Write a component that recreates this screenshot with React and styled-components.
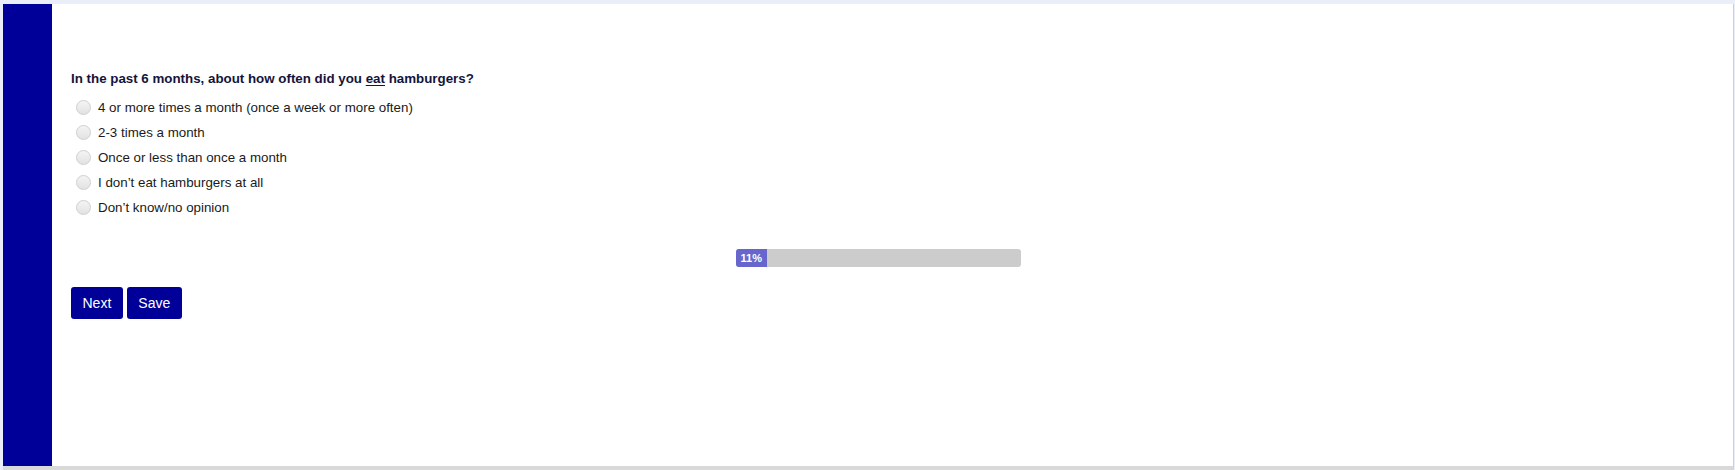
import styled, { createGlobalStyle } from 'styled-components'

const GlobalStyle = createGlobalStyle`
    html, body {
        margin: 0;
        padding: 0;
        background: #e9eef8;
    }
    body {
        font-family: "Liberation Sans", Arial, sans-serif;
    }
`

const options = [
    '4 or more times a month (once a week or more often)',
    '2-3 times a month',
    'Once or less than once a month',
    'I don\u2019t eat hamburgers at all',
    'Don\u2019t know/no opinion',
]

const progress = 11

function App() {
    return (
        <Frame>
            <GlobalStyle />
            <Panel>
                <Sidebar />
                <Content>
                    <Question>
                        In the past 6 months, about how often did you <u>eat</u> hamburgers?
                    </Question>
                    <OptionList>
                        {options.map((option) => (
                            <Option key={option}>
                                <Radio type="radio" name="hamburgers" />
                                {option}
                            </Option>
                        ))}
                    </OptionList>
                    <ProgressRow>
                        <ProgressBar>
                            <ProgressFill style={{ width: `${progress}%` }}>{progress}%</ProgressFill>
                        </ProgressBar>
                    </ProgressRow>
                    <Buttons>
                        <Button>Next</Button>
                        <Button>Save</Button>
                    </Buttons>
                </Content>
            </Panel>
        </Frame>
    )
}

const Frame = styled.div`
    height: 470px;
    box-sizing: border-box;
    padding: 4px 1px 0 3px;
    background: #e9eef8;
`

const Panel = styled.div`
    display: flex;
    height: 466px;
    box-sizing: border-box;
    background: white;
    border-bottom: 4px solid #d9d9d9;
    border-right: 1px solid #d0d0d0;
`

const Sidebar = styled.div`
    width: 49px;
    flex-shrink: 0;
    background: #000099;
`

const Content = styled.div`
    flex: 1;
    padding: 67px 48px 0 19px;
`

const Question = styled.div`
    font-size: 13.33px;
    font-weight: bold;
    line-height: 16px;
    color: #14143a;

    u {
        text-decoration-thickness: 1px;
        text-underline-offset: 2px;
    }
`

const OptionList = styled.div`
    display: flex;
    flex-direction: column;
    margin-top: 8px;
`

const Option = styled.label`
    display: flex;
    align-items: center;
    gap: 7px;
    height: 25px;
    padding-left: 5px;
    font-size: 13.33px;
    color: #1a1a1a;
`

const Radio = styled.input`
    appearance: none;
    margin: 0;
    width: 15px;
    height: 15px;
    border-radius: 50%;
    border: 1px solid #cfcfcf;
    background: linear-gradient(#f4f4f4, #e2e2e2);
    box-sizing: border-box;
`

const ProgressRow = styled.div`
    display: flex;
    justify-content: center;
    margin-top: 29px;
`

const ProgressBar = styled.div`
    display: flex;
    width: 285px;
    height: 18px;
    border-radius: 3px;
    background: #cccccc;
    overflow: hidden;
`

const ProgressFill = styled.div`
    display: flex;
    align-items: center;
    padding-left: 5px;
    box-sizing: border-box;
    background: #6666cc;
    color: white;
    font-size: 11px;
    font-weight: bold;
    white-space: nowrap;
`

const Buttons = styled.div`
    display: flex;
    gap: 4px;
    margin-top: 20px;
`

const Button = styled.button`
    height: 32px;
    padding: 0 11.5px;
    border: none;
    border-radius: 3px;
    background: #000099;
    color: white;
    font-family: "Liberation Sans", Arial, sans-serif;
    font-size: 14px;
`

export default App
